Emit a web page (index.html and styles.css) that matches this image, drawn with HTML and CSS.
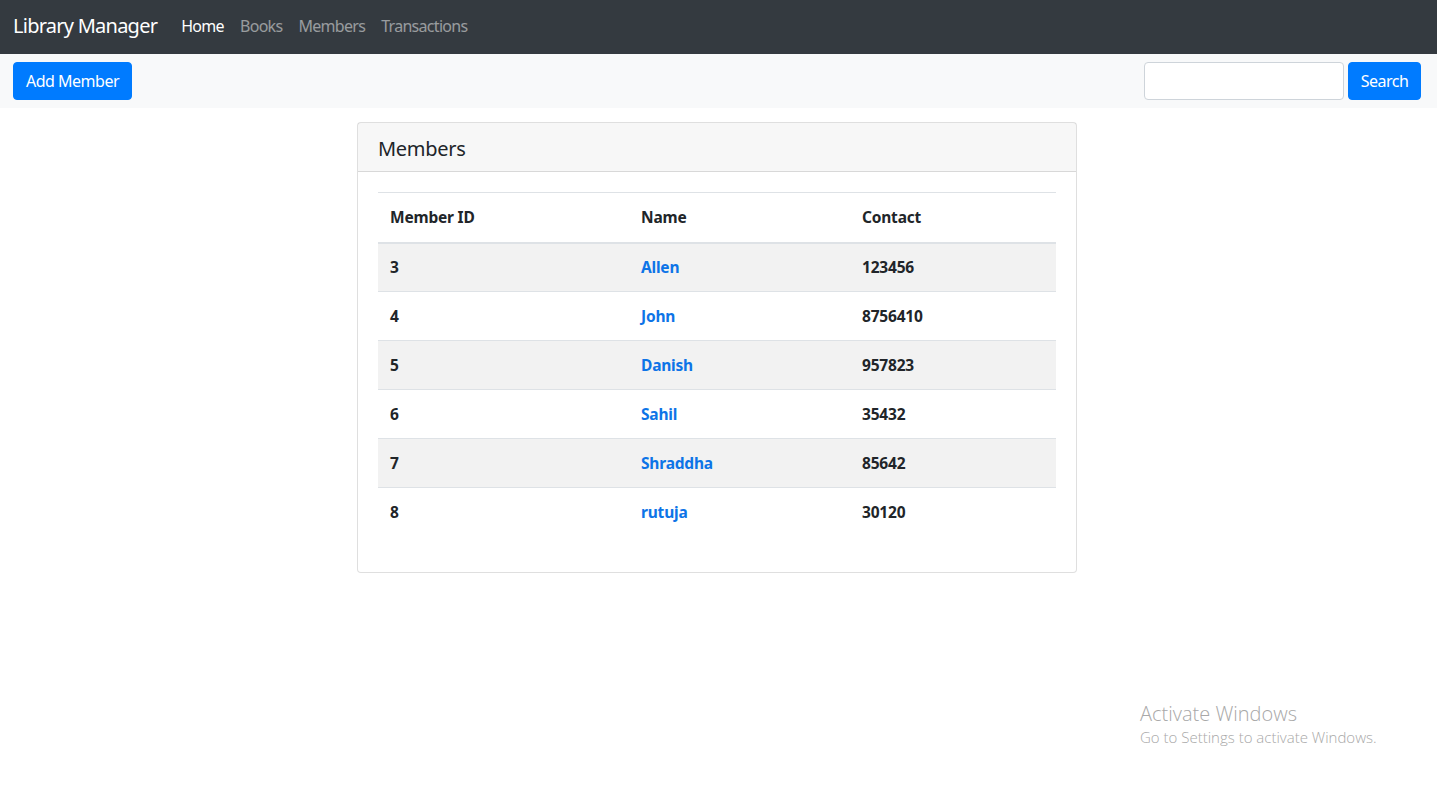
FILE: index.html
```html
<!DOCTYPE html>
<html lang="en">
<head>
<meta charset="utf-8">
<title>Library Manager</title>
<link rel="stylesheet" href="styles.css">
</head>
<body>
<nav class="navbar">
  <a class="brand" href="#">Library Manager</a>
  <ul class="nav-links">
    <li><a class="nav-link active" href="#">Home</a></li>
    <li><a class="nav-link" href="#">Books</a></li>
    <li><a class="nav-link" href="#">Members</a></li>
    <li><a class="nav-link" href="#">Transactions</a></li>
  </ul>
</nav>
<div class="toolbar">
  <button class="btn">Add Member</button>
  <form class="search">
    <input class="search-input" type="text">
    <button class="btn btn-search" type="button">Search</button>
  </form>
</div>
<main class="content">
  <section class="card">
    <div class="card-header">Members</div>
    <div class="card-body">
      <table class="table">
        <thead>
          <tr><th class="c1">Member ID</th><th class="c2">Name</th><th class="c3">Contact</th></tr>
        </thead>
        <tbody>
          <tr><td>3</td><td><a href="#">Allen</a></td><td>123456</td></tr>
          <tr><td>4</td><td><a href="#">John</a></td><td>8756410</td></tr>
          <tr><td>5</td><td><a href="#">Danish</a></td><td>957823</td></tr>
          <tr><td>6</td><td><a href="#">Sahil</a></td><td>35432</td></tr>
          <tr><td>7</td><td><a href="#">Shraddha</a></td><td>85642</td></tr>
          <tr><td>8</td><td><a href="#">rutuja</a></td><td>30120</td></tr>
        </tbody>
      </table>
    </div>
  </section>
</main>
<div class="watermark">
  <div class="wm-title">Activate Windows</div>
  <div class="wm-sub">Go to Settings to activate Windows.</div>
</div>
</body>
</html>
```
FILE: styles.css
```css
* { box-sizing: border-box; }
html, body { margin: 0; padding: 0; }
body {
  font-family: "Noto Sans", "Open Sans", sans-serif;
  font-size: 16px;
  line-height: 1.5;
  color: #212529;
  background: #fff;
  width: 1437px;
  height: 787px;
  overflow: hidden;
}
a { text-decoration: none; }

.navbar {
  display: flex;
  align-items: center;
  height: 54px;
  padding: 0 13px 2px;
  background: #343a40;
}
.brand {
  color: #fff;
  font-size: 20px;
  margin-right: 16px;
  letter-spacing: -0.75px;
}
.nav-links {
  display: flex;
  list-style: none;
  margin: 0;
  padding: 0;
}
.nav-link {
  display: block;
  padding: 0 8px;
  color: rgba(255,255,255,.5);
  letter-spacing: -0.7px;
}
.nav-link.active { color: #fff; }

.toolbar {
  display: flex;
  align-items: center;
  justify-content: space-between;
  height: 54px;
  padding: 0 16px 0 13px;
  background: #f8f9fa;
}
.btn {
  font-family: inherit;
  font-size: 16px;
  line-height: 24px;
  color: #fff;
  background: #007bff;
  border: 1px solid #007bff;
  border-radius: 4px;
  padding: 6px 12px;
  height: 38px;
  letter-spacing: -0.5px;
}
.btn-search { width: 73px; padding: 6px 0; }
.search { display: flex; gap: 4px; margin: 0; }
.search-input {
  width: 200px;
  height: 38px;
  border: 1px solid #ced4da;
  border-radius: 4px;
  background: #fff;
  padding: 6px 12px;
  font-family: inherit;
  font-size: 16px;
}

.content {
  display: flex;
  justify-content: center;
  padding-top: 14px;
  padding-right: 3px;
}
.card {
  width: 720px;
  border: 1px solid rgba(0,0,0,.125);
  border-radius: 4px;
  background: #fff;
}
.card-header {
  height: 49px;
  padding: 3px 20px 0;
  display: flex;
  align-items: center;
  font-size: 20px;
  background: rgba(0,0,0,.03);
  border-bottom: 1px solid rgba(0,0,0,.125);
  letter-spacing: -0.3px;
}
.card-body { padding: 20px 20px 0; }
.table {
  width: 678px;
  border-collapse: collapse;
  margin-bottom: 35px;
  font-weight: bold;
  font-size: 15.5px;
}
.table th, .table td {
  text-align: left;
  padding: 1px 12px 0;
  height: 49px;
  border-top: 1px solid #dee2e6;
  vertical-align: middle;
  letter-spacing: -0.2px;
}
.table thead th { border-bottom: 2px solid #dee2e6; height: 50px; }
.table tbody tr:first-child td { border-top: none; }
.table tbody tr:nth-child(odd) { background: #f2f2f2; }
.table a { color: #0d74e7; }
.c1 { width: 251px; }
.c2 { width: 221px; }
.c3 { width: 206px; }

.watermark {
  position: absolute;
  left: 1140px;
  top: 700px;
  color: #a8a8a8;
  font-family: "Open Sans", "Noto Sans", sans-serif;
}
.wm-title { font-size: 20px; line-height: 27px; font-weight: 300; }
.wm-sub { font-size: 15px; line-height: 20px; font-weight: 300; }
```
